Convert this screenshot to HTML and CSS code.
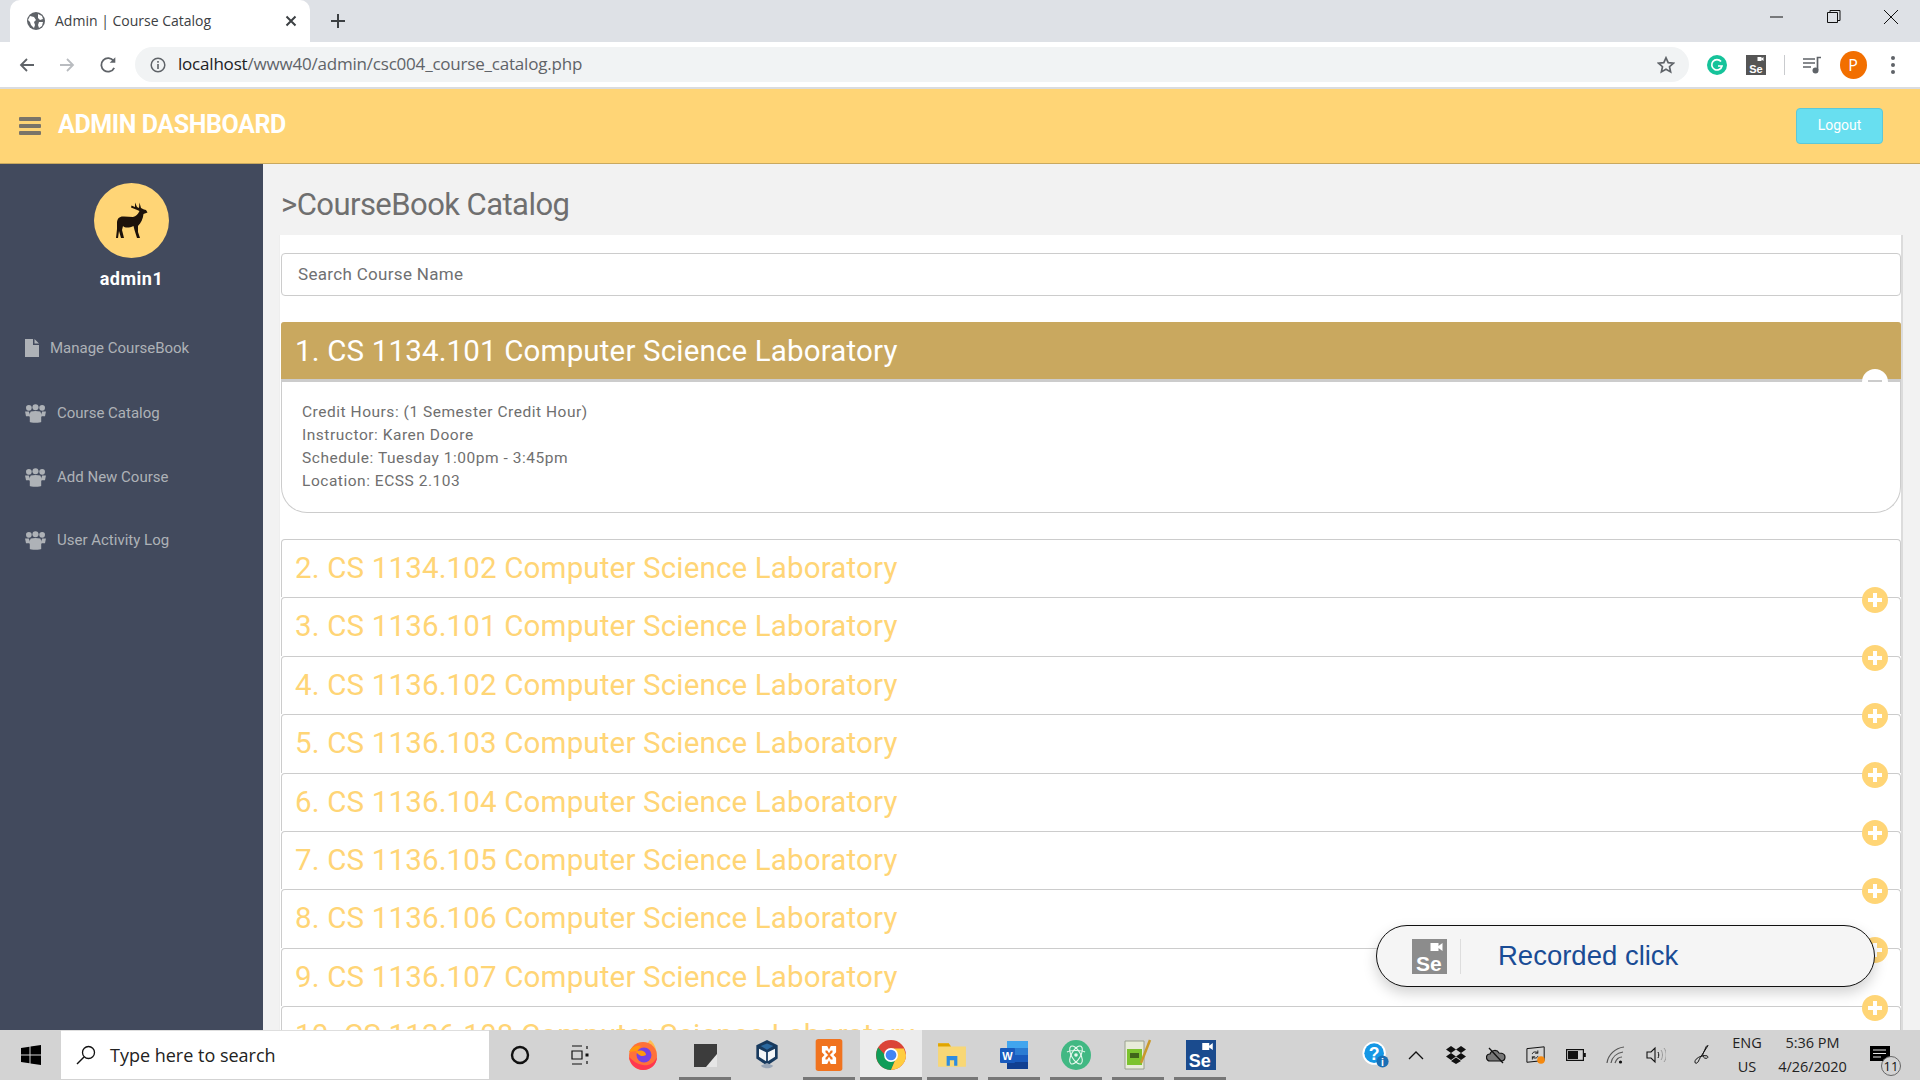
FILE: index.html
```html
<!DOCTYPE html>
<html lang="en">
<head>
<meta charset="utf-8">
<title>Admin | Course Catalog</title>
<link rel="stylesheet" href="styles.css">
</head>
<body>
<div class="tabstrip">
  <div class="tab">
    <svg class="favicon" viewBox="0 0 18 18"><circle cx="9" cy="9" r="9" fill="#5f6368"/><path d="M3 4l4 1 2 3-2 2 1 3-1 3-3-3-1-3-2-2zM11 2l4 2 1 3-3 1-2-2zM12 10l4 0-1 4-3 2-1-3z" fill="#fff"/></svg>
    <span class="tab-title">Admin | Course Catalog</span>
    <svg class="tab-x" viewBox="0 0 12 12"><path d="M1.500 1.500l9 9M10.500 1.500l-9 9" stroke="#3c4043" stroke-width="2"/></svg>
  </div>
  <svg class="newtab" viewBox="0 0 16 16"><path d="M8 1v14M1 8h14" stroke="#3c4043" stroke-width="2"/></svg>
  <div class="winctl">
    <svg viewBox="0 0 16 16"><path d="M1 8h13" stroke="#111" stroke-width="1"/></svg>
    <svg viewBox="0 0 16 16"><path d="M1.500 3.500h10v10h-10zM4 3.500V1.500h10v10h-2.500" fill="none" stroke="#111"/></svg>
    <svg viewBox="0 0 16 16"><path d="M1 1l14 14M15 1L1 15" stroke="#111"/></svg>
  </div>
</div>
<div class="toolbar">
  <svg class="tool" viewBox="0 0 16 16"><path d="M15 8H2M8 2L2 8l6 6" fill="none" stroke="#5f6368" stroke-width="1.800"/></svg>
  <svg class="tool" viewBox="0 0 16 16"><path d="M1 8h13M8 2l6 6-6 6" fill="none" stroke="#b9bcc0" stroke-width="1.800"/></svg>
  <svg class="tool tool-reload" viewBox="0 0 16 16"><path d="M13.500 10.500A6 6 0 1 1 13 4.500" fill="none" stroke="#5f6368" stroke-width="1.600"/><path d="M14.500 1v5h-5z" fill="#5f6368"/></svg>
  <div class="omnibox">
    <svg class="info" viewBox="0 0 16 16"><circle cx="8" cy="8" r="6.800" fill="none" stroke="#5f6368" stroke-width="1.500"/><path d="M8 7v5M8 4v1.800" stroke="#5f6368" stroke-width="1.600"/></svg>
    <span class="url"><span class="url-host">localhost</span>/www40/admin/csc004_course_catalog.php</span>
    <svg class="star" viewBox="0 0 18 18"><path d="M9 1.800l2.200 4.800 5.200.6-3.900 3.500 1.100 5.200L9 13.300l-4.600 2.600 1.100-5.200-3.900-3.500 5.200-.6z" fill="none" stroke="#5f6368" stroke-width="1.700"/></svg>
  </div>
  <div class="ext-group">
    <svg class="ext-g" viewBox="0 0 20 20"><circle cx="10" cy="10" r="10" fill="#15c39a"/><path d="M14 6.500A5.200 5.200 0 1 0 15 11h-4" fill="none" stroke="#fff" stroke-width="1.700"/></svg>
    <div class="ext-se se-logo"><svg class="se-cam" viewBox="0 0 12 8"><path d="M0 0h8v8H0zM8 3l4-3v8L8 5z" fill="#fff"/></svg><span>Se</span></div>
    <i class="ext-sep"></i>
    <svg class="ext-media" viewBox="0 0 20 18"><path d="M1 3h12M1 7h12M1 11h8" stroke="#5f6368" stroke-width="1.700"/><path d="M15.500 14V1.500H19" fill="none" stroke="#5f6368" stroke-width="1.700"/><circle cx="13.500" cy="14.500" r="3" fill="#5f6368"/></svg>
    <div class="avatar-p">P</div>
    <div class="dots"><i></i><i></i><i></i></div>
  </div>
</div>
<header class="topbar">
  <div class="burger"><i></i><i></i><i></i></div>
  <div class="brand">ADMIN DASHBOARD</div>
  <button class="logout">Logout</button>
</header>
<div class="body-row">
  <aside class="sidebar">
    <div class="profile">
      <svg viewBox="0 0 75 75">
        <circle cx="37.500" cy="37.500" r="37.500" fill="#ffd576"/>
        <path d="M23 40C23 35 26 33 30 33.500L39 34C42 33.500 44 31 45.500 28L42 26.500 37 24.500 37.500 22.500 41 24 41 19.500 43 24 45 25 45.500 19.500 47 25 50 26.500 52 27 53.500 29.500 49.500 31C49 36 47 40 44 43L44 49 46 55 43 55 40.500 47 39.500 43C35 45 31 45 29 43L28 47 30 55 27 55 25 48 24 55 22 55 23 46Z" fill="#1d120a"/>
      </svg>
      <div class="username">admin1</div>
    </div>
    <nav class="nav">
      <a class="nav-item nav-first"><svg class="nav-doc" viewBox="0 0 14 18"><path d="M0 0h8v6h6v12H0zM9.500 0L14 4.500H9.500z" fill="#aeb2b7"/></svg><span class="nav-text-a">Manage CourseBook</span></a>
      <a class="nav-item nav-second"><svg class="nav-users" viewBox="0 0 22 20"><g fill="#aeb2b7"><circle cx="4" cy="4" r="3"/><circle cx="11" cy="3.500" r="3.200"/><circle cx="18" cy="4" r="3"/><path d="M0 8h4l1 3-1 2H1zM22 8h-4l-1 3 1 2h3z"/><path d="M6 8c3-1 7-1 10 0l2 4-1 2v5c0 1-12 1-12 0v-5l-1-2z"/></g></svg><span class="nav-text">Course Catalog</span></a>
      <a class="nav-item nav-third"><svg class="nav-users" viewBox="0 0 22 20"><g fill="#aeb2b7"><circle cx="4" cy="4" r="3"/><circle cx="11" cy="3.500" r="3.200"/><circle cx="18" cy="4" r="3"/><path d="M0 8h4l1 3-1 2H1zM22 8h-4l-1 3 1 2h3z"/><path d="M6 8c3-1 7-1 10 0l2 4-1 2v5c0 1-12 1-12 0v-5l-1-2z"/></g></svg><span class="nav-text">Add New Course</span></a>
      <a class="nav-item nav-fourth"><svg class="nav-users" viewBox="0 0 22 20"><g fill="#aeb2b7"><circle cx="4" cy="4" r="3"/><circle cx="11" cy="3.500" r="3.200"/><circle cx="18" cy="4" r="3"/><path d="M0 8h4l1 3-1 2H1zM22 8h-4l-1 3 1 2h3z"/><path d="M6 8c3-1 7-1 10 0l2 4-1 2v5c0 1-12 1-12 0v-5l-1-2z"/></g></svg><span class="nav-text">User Activity Log</span></a>
    </nav>
  </aside>
  <main class="main">
    <h1 class="page-title">&gt;CourseBook Catalog</h1>
    <section class="panel">
      <div class="search">Search Course Name</div>
      <article class="course course-open">
        <div class="course-head">1. CS 1134.101 Computer Science Laboratory<span class="toggle toggle-minus"><i></i></span></div>
        <div class="course-body">
          <div>Credit Hours: (1 Semester Credit Hour)</div>
          <div>Instructor: Karen Doore</div>
          <div>Schedule: Tuesday 1:00pm - 3:45pm</div>
          <div>Location: ECSS 2.103</div>
        </div>
      </article>
      <article class="course"><div class="course-head">2. CS 1134.102 Computer Science Laboratory<span class="toggle"></span></div></article>
      <article class="course"><div class="course-head">3. CS 1136.101 Computer Science Laboratory<span class="toggle"></span></div></article>
      <article class="course"><div class="course-head">4. CS 1136.102 Computer Science Laboratory<span class="toggle"></span></div></article>
      <article class="course"><div class="course-head">5. CS 1136.103 Computer Science Laboratory<span class="toggle"></span></div></article>
      <article class="course"><div class="course-head">6. CS 1136.104 Computer Science Laboratory<span class="toggle"></span></div></article>
      <article class="course"><div class="course-head">7. CS 1136.105 Computer Science Laboratory<span class="toggle"></span></div></article>
      <article class="course"><div class="course-head">8. CS 1136.106 Computer Science Laboratory<span class="toggle"></span></div></article>
      <article class="course"><div class="course-head">9. CS 1136.107 Computer Science Laboratory<span class="toggle"></span></div></article>
      <article class="course"><div class="course-head">10. CS 1136.108 Computer Science Laboratory<span class="toggle"></span></div></article>
    </section>
    <div class="toast">
      <div class="toast-logo se-logo"><svg class="se-cam" viewBox="0 0 12 8"><path d="M0 0h8v8H0zM8 3l4-3v8L8 5z" fill="#fff"/></svg><span>Se</span></div>
      <i class="toast-sep"></i>
      <span class="toast-text">Recorded click</span>
    </div>
  </main>
</div>
<footer class="taskbar">
  <div class="start"><svg viewBox="0 0 20 20"><path d="M0 3l8.500-1.300V9.500H0zM9.500 1.500L20 0v9.500H9.500zM0 10.500h8.500v7.800L0 17zM9.500 10.500H20V20L9.500 18.500z" fill="#000"/></svg></div>
  <div class="tb-search">
    <svg viewBox="0 0 20 20"><circle cx="12.500" cy="7.500" r="6" fill="none" stroke="#111" stroke-width="1.300"/><path d="M8 12l-7 7" stroke="#111" stroke-width="1.500"/></svg>
    <span>Type here to search</span>
  </div>
  <div class="tb-app"><svg class="i20" viewBox="0 0 20 20"><circle cx="10" cy="10" r="8" fill="none" stroke="#111" stroke-width="2.400"/></svg></div>
  <div class="tb-app tb-taskview"><svg class="i20" viewBox="0 0 20 20"><path d="M3 1h10M3 19h10M3 6h10v8H3zM18 1v3M18 16v3" fill="none" stroke="#111" stroke-width="1.200"/><path d="M16.500 8.500h3v3h-3z" fill="#111"/></svg></div>
  <div class="tb-app"><svg class="i32" viewBox="0 0 30 32"><path d="M22 1c5 4 7 10 6 15L16 8z" fill="#ffbd4f"/><circle cx="15" cy="17" r="14" fill="#ff7139"/><path d="M1 13c2-5 7-7 12-6l-4 5z" fill="#ff980e"/><circle cx="16" cy="16" r="7.500" fill="#7542e5"/><path d="M8 13c4-3 10-1 10 3-3 2-6 1-8-1z" fill="#ff980e"/><path d="M1 18c1 8 8 13 14 13 8 0 14-6 14-13-3 7-9 9-14 8-6-1-10-4-14-8z" fill="#ff3750"/></svg></div>
  <div class="tb-app tb-run"><svg class="i23" viewBox="0 0 23 23"><path d="M0 0h23v14l-9 9H0z" fill="#3c3c3c"/><path d="M12 23l11-13v13z" fill="#e6e6e6"/></svg></div>
  <div class="tb-app"><svg class="i32" viewBox="0 0 28 36"><path d="M14 1l12 6v15l-12 8-12-8V7z" fill="#183a5e"/><path d="M5 11l8 4v10l-8-5zM23 11l-8 4v10l8-5z" fill="#f4f6f8"/><path d="M14 5l7 3-7 4-7-4z" fill="#2a689f"/><path d="M7 30c3 4 11 4 14 0l-7-3z" fill="#9aa7b8"/></svg></div>
  <div class="tb-app tb-run"><svg class="i32" viewBox="0 0 30 36"><rect width="30" height="36" rx="3" fill="#f0731f"/><path d="M7 8h6l2 4 2-4h6v7l-3 3 3 3v7h-6l-2-4-2 4H7v-7l3-3-3-3z" fill="#fff"/><path d="M11 13h2l2 3 2-3h2v2l-3 3 3 3v2h-2l-2-3-2 3h-2v-2l3-3-3-3z" fill="#f0731f"/></svg></div>
  <div class="tb-app tb-active"><svg class="i32" viewBox="0 0 28 28"><circle cx="14" cy="14" r="14" fill="#db4437"/><path d="M2 7a14 14 0 0 0 12 21l6-14-6 6z" fill="#0f9d58"/><path d="M28 14a14 14 0 0 1-14 14l6-14-6-6h12z" fill="#ffcd40"/><circle cx="14" cy="14" r="6.500" fill="#fff"/><circle cx="14" cy="14" r="5" fill="#4285f4"/></svg></div>
  <div class="tb-app tb-run"><svg class="i32" viewBox="0 0 28 28"><path d="M1 3h10l2 3h14v19H1z" fill="#f8d775"/><path d="M1 3h10l2 3H1z" fill="#e0a500"/><path d="M9 24v-9h10v9h-3v-5h-4v5z" fill="#2d8ce0"/></svg></div>
  <div class="tb-app tb-run"><svg class="i32" viewBox="0 0 30 30"><path d="M8 1h21v28H8z" fill="#185abd"/><path d="M8 1h21v7H8z" fill="#41a5ee"/><path d="M8 8h21v7H8z" fill="#2b7cd3"/><path d="M8 22h21v7H8z" fill="#103f91"/><rect x="1" y="8" width="15" height="15" rx="1" fill="#185abd"/><text class="word-w" x="8.500" y="19.500">W</text></svg></div>
  <div class="tb-app tb-run"><svg class="i32" viewBox="0 0 30 30"><circle cx="15" cy="15" r="15" fill="#41b883"/><g fill="none" stroke="#e9f8ef" stroke-width="1.100"><ellipse cx="15" cy="15" rx="10" ry="4.500" transform="rotate(60 15 15)"/><ellipse cx="15" cy="15" rx="10" ry="4.500" transform="rotate(-60 15 15)"/><path d="M6 12c3-2 15-2 18 0"/></g><circle cx="15" cy="15" r="1.800" fill="#e9f8ef"/></svg></div>
  <div class="tb-app tb-run"><svg class="i32" viewBox="0 0 30 32"><path d="M2 2h19v28H2z" fill="#e8ecd9" stroke="#9aa08f"/><path d="M4 10h15v16H4z" fill="#7cc32e"/><path d="M7 14h9v5H7z" fill="#40651a"/><path d="M27 1L18 24" stroke="#c99a2c" stroke-width="2.500"/></svg></div>
  <div class="tb-app tb-run"><div class="se-app se-logo"><svg class="se-cam" viewBox="0 0 12 8"><path d="M0 0h8v8H0zM8 3l4-3v8L8 5z" fill="#fff"/></svg><span>Se</span></div></div>
  <div class="tray">
    <div class="tray-cell"><svg class="help" viewBox="0 0 30 30"><circle cx="13" cy="13" r="12.500" fill="#fff"/><circle cx="13" cy="13" r="10.500" fill="#1597e5"/><text class="help-q" x="13" y="20">?</text><circle cx="22" cy="22" r="6.500" fill="#1a6fb5"/><text class="help-i" x="22" y="26.500">i</text></svg></div>
    <div class="tray-cell"><svg class="i16" viewBox="0 0 16 16"><path d="M1 12l7-7 7 7" fill="none" stroke="#111" stroke-width="1.300"/></svg></div>
    <div class="tray-cell"><svg class="i20" viewBox="0 0 20 18"><path d="M5 0L0 3.500l5 3.500 5-3.500zM15 0l-5 3.500 5 3.500 5-3.500zM0 10.500L5 14l5-3.500L5 7zM20 10.500L15 14l-5-3.500L15 7zM5 15l5 3 5-3-5-3.500z" fill="#111"/></svg></div>
    <div class="tray-cell"><svg class="i20" viewBox="0 0 20 18"><path d="M4 15a3.500 3.500 0 0 1 0-7c1-4 7-5 9-1 4 0 6 2 6 4s-1 4-4 4z" fill="#777" stroke="#111" stroke-width="1.200"/><path d="M3 2l14 15" stroke="#111" stroke-width="1.300"/></svg></div>
    <div class="tray-cell tray-sync"><svg class="i20" viewBox="0 0 22 20"><path d="M1 3l19-2v15l-19 2z" fill="none" stroke="#111" stroke-width="1.100"/><path d="M7 9c0-3 5-3 6-1M13 11c0 3-5 3-6 1M13 5v3h-3M7 15v-3h3" fill="none" stroke="#111"/><circle cx="16.500" cy="15.500" r="4.200" fill="#f5890f"/></svg></div>
    <div class="tray-cell"><svg class="i20" viewBox="0 0 20 12"><rect x=".6" y=".6" width="16.800" height="10.800" fill="none" stroke="#111" stroke-width="1.200"/><rect x="2" y="2" width="10" height="8" fill="#111"/><rect x="18" y="4" width="1.800" height="4" fill="#111"/></svg></div>
    <div class="tray-cell"><svg class="i20" viewBox="0 0 20 18"><path d="M1 17C2 9 9 2 18 1M5 17c1-6 6-10 12-11M9 17c1-3 3-6 7-6" fill="none" stroke="#555" stroke-width="1.200"/><circle cx="14.500" cy="16" r="1.600" fill="#111"/></svg></div>
    <div class="tray-cell"><svg class="i20" viewBox="0 0 20 18"><path d="M1 6h4l4-4v14l-4-4H1z" fill="none" stroke="#111" stroke-width="1.100"/><path d="M12 6c1 2 1 4 0 6" fill="none" stroke="#111"/><path d="M15 4c2 3 2 7 0 10M18 2c3 4 3 10 0 14" fill="none" stroke="#999"/></svg></div>
    <div class="tray-cell tray-pen"><svg class="i20" viewBox="0 0 20 24"><path d="M17 1l-9 14c-2 3-2 6-5 7-2 0-2-3 0-5 3-3 8-5 13-4 2 1 1 3-1 3-3 0-4-2-4-5l4-9c1-2 3-2 2-1z" fill="none" stroke="#111" stroke-width="1.200"/></svg></div>
    <div class="tray-lang"><span>ENG</span><span>US</span></div>
    <div class="tray-clock"><span>5:36 PM</span><span>4/26/2020</span></div>
    <div class="tray-notif"><svg viewBox="0 0 20 18"><path d="M0 0h20v15H0z" fill="#000"/><path d="M3 4h13M3 7.500h13M3 11h8" stroke="#e6e6e6" stroke-width="1.100"/></svg><span class="notif-count">11</span></div>
  </div>
</footer>
</body>
</html>
```

FILE: styles.css
```css
* { box-sizing: border-box; }
html, body { margin: 0; height: 100%; }
body {
  width: 1920px; height: 1080px; overflow: hidden;
  display: flex; flex-direction: column;
  font-family: Roboto, "Noto Sans", sans-serif;
  background: #f2f2f2;
}
i { display: block; }

/* browser chrome */
.tabstrip { height: 42px; flex: none; background: #dee1e6; display: flex; align-items: flex-end; padding-left: 10px; }
.tab { width: 300px; height: 42px; background: #fff; border-radius: 10px 10px 0 0; display: flex; align-items: center; padding: 0 13px 1px 17px; }
.favicon { width: 18px; height: 18px; flex: none; }
.tab-title { font: 14px "Open Sans", sans-serif; color: #3c4043; margin-left: 10px; flex: 1; white-space: nowrap; }
.tab-x { width: 12px; height: 12px; }
.newtab { width: 16px; height: 16px; margin: 0 0 13px 20px; }
.winctl { margin-left: auto; align-self: flex-start; display: flex; gap: 41px; padding: 9px 21px 0 0; }
.winctl svg { width: 16px; height: 16px; }

.toolbar { height: 47px; flex: none; background: #fff; border-bottom: 2px solid #dadce0; display: flex; align-items: center; padding: 0 0 0 19px; }
.tool { width: 16px; height: 16px; margin-right: 24px; flex: none; }
.tool-reload { width: 18px; height: 18px; margin-right: 22px; }
.tool + .omnibox { margin-left: -4px; }
.omnibox { width: 1554px; height: 35px; background: #f1f3f4; border-radius: 18px; display: flex; align-items: center; padding: 0 14px 0 15px; }
.info { width: 16px; height: 16px; flex: none; }
.url { font: 17px "Open Sans", sans-serif; color: #5f6368; margin-left: 12px; padding-bottom: 2px; flex: 1; white-space: nowrap; letter-spacing: -.2px; }
.url-host { color: #202124; }
.star { width: 18px; height: 18px; }
.ext-group { display: flex; align-items: center; flex: 1; position: relative; height: 100%; }
.ext-g { width: 20px; height: 20px; margin-left: 18px; }
.ext-se { width: 20px; height: 20px; margin-left: 19px; background: #555; font-size: 11px; }
.ext-se .se-cam { width: 7px; height: 4px; top: 2px; right: 2px; }
.ext-sep { width: 1px; height: 20px; background: #c9cbce; margin-left: 18px; }
.ext-media { width: 20px; height: 18px; margin-left: 17px; }
.avatar-p { width: 27px; height: 28px; border-radius: 50%; background: #f26f00; color: #fff; font: 16px "Open Sans", sans-serif; display: flex; align-items: center; justify-content: center; margin-left: 17.500px; }
.dots { margin-left: 24px; display: flex; flex-direction: column; gap: 3px; }
.dots i { width: 4px; height: 4px; border-radius: 50%; background: #5f6368; }

/* Se logo tile shared by extension, toast and taskbar */
.se-logo { position: relative; color: #fff; font-family: "Liberation Sans", sans-serif; font-weight: 700; display: flex; align-items: flex-end; justify-content: center; line-height: 1; }
.se-cam { position: absolute; }

/* app header */
.topbar { height: 75px; flex: none; background: #ffd576; border-bottom: 1px solid #c9a95f; display: flex; align-items: center; padding: 0 37px 0 19px; }
.burger { width: 22px; display: flex; flex-direction: column; gap: 3px; }
.burger i { height: 4px; background: #7a7468; border-radius: 1px; }
.brand { font: 700 25px Roboto, sans-serif; color: #fff; margin-left: 17px; padding-bottom: 4px; letter-spacing: -.4px; white-space: nowrap; }
.logout { margin-left: auto; width: 87px; height: 36px; background: #68dff0; border: 1px solid #5dc8d8; border-radius: 4px; color: #fff; font: 14px Roboto, sans-serif; padding: 0 0 2px; }

/* layout */
.body-row { flex: 1; min-height: 0; display: flex; position: relative; }
.sidebar { width: 263px; flex: none; background: #424a5d; }
.profile { display: flex; flex-direction: column; align-items: center; padding-top: 19px; }
.profile svg { width: 75px; height: 75px; }
.username { color: #fff; font: 700 18px Roboto, sans-serif; margin-top: 10px; letter-spacing: .5px; }
.nav { display: flex; flex-direction: column; margin-top: 47px; padding-left: 25px; }
.nav-item { display: flex; align-items: center; color: #aeb2b7; font-size: 15px; height: 24px; }
.nav-second { margin-top: 41px; }
.nav-third { margin-top: 40px; }
.nav-fourth { margin-top: 39px; }
.nav-doc { width: 14px; height: 18px; flex: none; }
.nav-users { width: 21px; height: 19px; flex: none; }
.nav-text-a { margin-left: 11px; }
.nav-text { margin-left: 11px; }

/* content */
.main { flex: 1; min-width: 0; position: relative; overflow: hidden; padding-left: 17px; }
.page-title { margin: 0; height: 71px; padding: 8px 0 0 1px; font-weight: 400; font-size: 31px; line-height: 66px; color: #6f6f6f; letter-spacing: -.55px; }
.panel { width: 1623px; background: #fff; padding: 18px 0 0 1px; border-right: 2px solid #dcdcdc; box-shadow: -1px 0 0 #eee; }
.search { width: 1620px; height: 43px; border: 1px solid #ccc; border-radius: 4px; font-size: 17px; color: #6f7072; line-height: 41px; padding-left: 16px; margin-bottom: 26px; letter-spacing: .32px; }
.course { width: 1620px; height: 58.400px; border: 1px solid #ccc; border-bottom: 0; border-radius: 4px 4px 0 0; position: relative; }
.course-head { height: 58px; padding-left: 13px; font-size: 29.500px; line-height: 57px; color: #ffd576; white-space: nowrap; letter-spacing: .16px; }
.toggle { position: absolute; right: 12px; top: 46.500px; width: 26px; height: 26px; border-radius: 50%; background: #ffd576; z-index: 1; }
.toggle::before, .toggle::after { content: ""; position: absolute; background: #fff; }
.toggle::before { left: 6px; right: 6px; top: 11px; height: 4px; }
.toggle::after { top: 6px; bottom: 6px; left: 11px; width: 4px; }
.course-open { height: auto; border: 1px solid #ccc; border-top: 0; border-radius: 4px 4px 26px 26px; margin-bottom: 26px; }
.course-open .course-head { height: 60px; background: #c9a85f; border-bottom: 3px solid #ccc; color: #fff; margin: 0 -1px; padding-left: 14px; line-height: 58px; border-radius: 3px 3px 0 0; }
.toggle-minus { background: #fff; top: 47px; height: 13px; border-radius: 13px 13px 0 0; }
.toggle-minus::after { display: none; }
.toggle-minus::before { background: #ccc; top: 11px; height: 2px; }
.course-body { height: 130px; padding: 18.500px 0 0 20px; font-size: 15.500px; line-height: 23px; color: #6f6f6f; letter-spacing: .53px; }

/* recording toast */
.toast { position: absolute; left: 1113px; top: 761px; width: 499px; height: 62px; background: #f5f5f5; border: 1px solid #111; border-radius: 31px; box-shadow: 0 6px 14px rgba(0,0,0,.18); display: flex; align-items: center; padding-left: 35px; z-index: 2; }
.toast-logo { width: 35px; height: 35px; background: #8c8c8c; font-size: 21px; justify-content: flex-start; padding-left: 4px; }
.toast-logo .se-cam { width: 13px; height: 8px; top: 4px; right: 4px; }
.toast-sep { width: 1px; height: 35px; background: #ddd; margin-left: 13px; }
.toast-text { font: 27.500px "Liberation Sans", sans-serif; color: #1a4c95; margin-left: 37px; }

/* windows taskbar */
.taskbar { height: 50px; flex: none; background: #d3d3d3; display: flex; align-items: stretch; z-index: 3; position: relative; }
.start { width: 61px; display: flex; align-items: center; justify-content: center; }
.start svg { width: 20px; height: 20px; }
.tb-search { width: 428px; background: #fff; display: flex; align-items: center; padding-left: 15px; margin-bottom: 1px; border-top: 1px solid #dedede; }
.tb-search svg { width: 20px; height: 20px; flex: none; }
.tb-search span { font: 18px "Open Sans", sans-serif; color: #222; margin-left: 14px; white-space: nowrap; }
.tb-app { width: 61.800px; display: flex; align-items: center; justify-content: center; position: relative; }
.tb-taskview { padding-right: 6px; }
.tb-run::after { content: ""; position: absolute; left: 5px; right: 5px; bottom: 0; height: 3px; background: #777; }
.tb-active { background: #ececec; }
.tb-active::after { content: ""; position: absolute; left: 0; right: 0; bottom: 0; height: 3px; background: #777; }
.i16 { width: 16px; height: 16px; }
.i20 { width: 20px; height: 20px; }
.i23 { width: 23px; height: 23px; }
.i32 { width: 30px; height: 32px; }
.se-app { width: 30px; height: 30px; background: #1a4b8e; font-size: 18px; padding-left: 3px; justify-content: flex-start; left: 1px; }
.se-app .se-cam { width: 11px; height: 7px; top: 3px; right: 3px; }
.word-w { fill: #fff; font: 700 11px "Liberation Sans", sans-serif; text-anchor: middle; }
.help-q { fill: #fff; font: 700 19px "Liberation Sans", sans-serif; text-anchor: middle; }
.help-i { fill: #fff; font: 700 11px "Liberation Sans", sans-serif; text-anchor: middle; }
.tray { margin-left: auto; display: flex; align-items: stretch; padding-right: 15px; }
.tray-cell { width: 40px; display: flex; align-items: center; justify-content: center; }
.help { width: 28px; height: 28px; }
.tray-pen { width: 44px; margin-left: 4px; }
.tray-lang { width: 46px; display: flex; flex-direction: column; align-items: center; justify-content: center; font: 14.500px/24px "Open Sans", sans-serif; color: #222; }
.tray-clock { width: 85px; display: flex; flex-direction: column; align-items: center; justify-content: center; font: 14.500px/24px "Open Sans", sans-serif; color: #222; }
.tray-notif { width: 50px; position: relative; display: flex; align-items: center; justify-content: center; }
.tray-notif svg { width: 20px; height: 18px; }
.notif-count { position: absolute; left: 26px; top: 26px; width: 20px; height: 20px; border: 1px solid #666; border-radius: 50%; background: #d3d3d3; font: 13px/18px "Open Sans", sans-serif; text-align: center; color: #111; }
```
